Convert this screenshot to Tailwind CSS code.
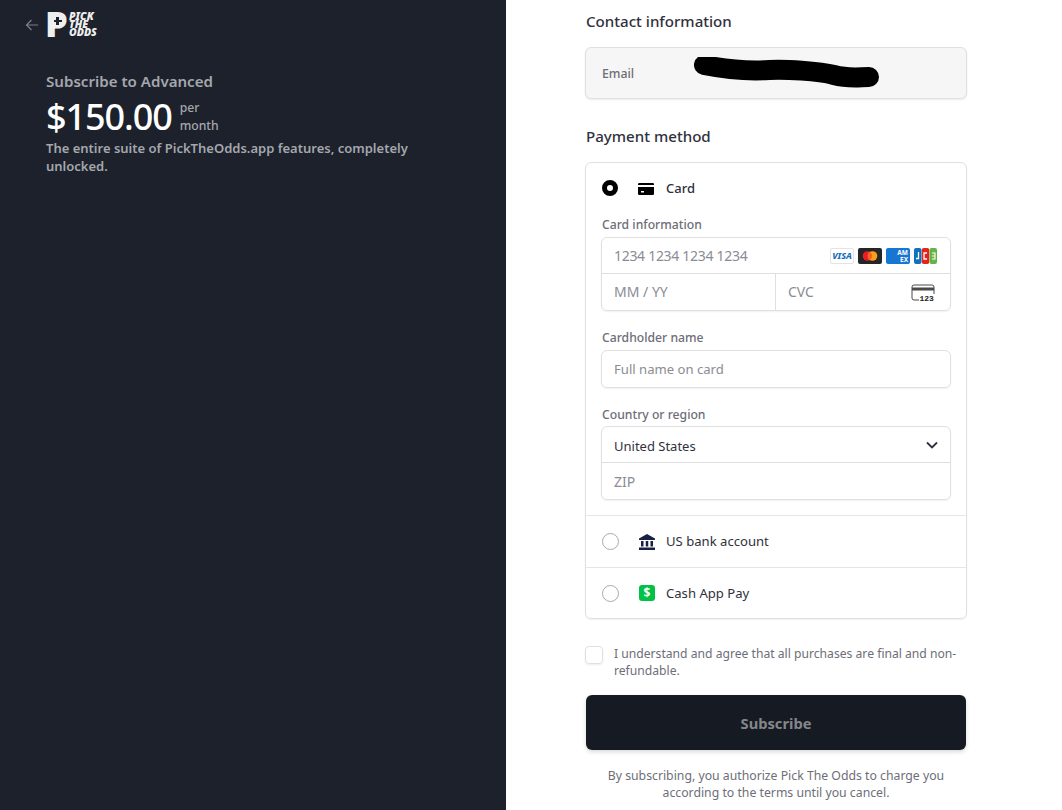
<!doctype html>
<html><head><meta charset="utf-8"><script src="https://cdn.jsdelivr.net/npm/@tailwindcss/browser@4"></script></head>
<body class="m-0 h-[810px] w-[1062px] overflow-hidden bg-white font-['Noto_Sans','Open_Sans',sans-serif]">
<div class="flex h-[810px]">
  <aside class="w-[506px] h-full bg-[#1c212c] shrink-0 pt-[12px]">
    <div class="flex items-center h-[25px] pl-[25px]">
      <svg class="w-[14px] h-[14px] text-[#7c7f86]" viewBox="0 0 14 14" fill="none" stroke="currentColor" stroke-width="1.2"><path d="M13 7H1.5M6.5 2 1.5 7l5 5"/></svg>
      <div class="relative ml-[9px] w-[50px] h-[25px]">
        <span class="absolute left-[-3px] top-[-12px] text-[36px] leading-[48px] font-black text-[#efefef]">P</span>
        <span class="absolute left-[4px] top-[3px] w-[10px] h-[11px] bg-[#efefef]"></span>
        <span class="absolute left-[8px] top-[5px] w-[2.500px] h-[8px] bg-[#1c212c]"></span>
        <span class="absolute left-[5.500px] top-[7.750px] w-[8px] h-[2.500px] bg-[#1c212c]"></span>
        <span class="absolute left-[21px] top-[0px] text-[10.500px] leading-[8px] italic font-black text-[#efefef] whitespace-pre">PICK
THE
ODDS</span>
      </div>
    </div>
    <div class="ml-[46px] mt-[33px] w-[380px]">
      <div class="text-[15.100px] leading-[22px] font-semibold text-[#a5a7ac]">Subscribe to Advanced</div>
      <div class="flex items-center mt-[6px] h-[38px]">
        <span class="text-[36px] leading-[38px] font-medium text-white tracking-[-1.100px]">$150.00</span>
        <span class="ml-[8px] text-[12.200px] leading-[18px] font-medium text-[#a5a7ac]">per<br>month</span>
      </div>
      <p class="mt-[3px] text-[13px] leading-[18px] font-semibold text-[#a5a7ac]">The entire suite of PickTheOdds.app features, completely unlocked.</p>
    </div>
  </aside>
  <main class="ml-[79px] w-[382px] pt-[10px] text-[#30313d]">
    <h2 class="ml-[1px] text-[15.100px] leading-[22px] font-medium">Contact information</h2>
    <div class="relative mt-[15px] h-[52px] rounded-md border border-[#e0e0e0] bg-[#f6f6f6] shadow-[0_1px_2px_rgba(0,0,0,0.08)] flex items-center pl-[16px] pt-[2px] text-[12.300px] font-medium text-[#6d6e78]">
      Email
      <svg class="absolute left-[108px] top-[9px] w-[188px] h-[32px]" viewBox="0 0 188 32" fill="none"><path d="M10 8C35 13 60 14 75 13S125 14 140 18 165 20 175 20" stroke="#000" stroke-width="20" stroke-linecap="round" stroke-linejoin="round"/></svg>
    </div>
    <h2 class="ml-[1px] mt-[26px] text-[15.100px] leading-[22px] font-medium">Payment method</h2>
    <div class="mt-[15px] rounded-md border border-[#e0e0e0] shadow-[0_1px_2px_rgba(0,0,0,0.06)]">
      <div class="px-[15px] pb-[15px]">
        <div class="flex items-center h-[52px]">
          <span class="ml-[1px] mb-[2px] w-[16px] h-[16px] rounded-full border-[5px] border-black bg-white shrink-0"></span>
          <svg class="ml-[20px] w-[16px] h-[12px]" viewBox="0 0 16 12"><path d="M0 1.2Q0 0 1.2 0h13.6Q16 0 16 1.2V2H0ZM0 4h16v6.8Q16 12 14.800 12H1.200Q0 12 0 10.800ZM3 8v1.500h3V8Z" fill="#000"/></svg>
          <span class="ml-[12px] text-[13px] font-medium">Card</span>
        </div>
        <div class="ml-[1px] text-[12.200px] leading-[18px] font-medium text-[#6d6e78] mt-[1px]">Card information</div>
        <div class="mt-[3px] rounded-md border border-[#e0e0e0] shadow-[0_1px_2px_rgba(0,0,0,0.06)] text-[14px] text-[#8b8c94]">
          <div class="flex items-center h-[36px] pl-[12px] pr-[13px] border-b border-[#e0e0e0]">
            <span class="tracking-[-0.3px]">1234 1234 1234 1234</span>
            <div class="ml-auto flex gap-[4px] items-center">
              <span class="w-[24px] h-[16px] rounded-[2px] border border-[#e3e3e3] bg-white flex items-center justify-center text-[9px] leading-none font-extrabold italic text-[#1a6fc0]">VISA</span>
              <svg class="w-[24px] h-[16px]" viewBox="0 0 24 16"><rect width="24" height="16" rx="2" fill="#252525"/><circle cx="9.500" cy="8" r="4.800" fill="#eb1c26"/><circle cx="14.500" cy="8" r="4.800" fill="#f99f1b"/><path d="M12 4a4.800 4.800 0 0 1 0 8 4.800 4.800 0 0 1 0-8" fill="#f26122"/></svg>
              <span class="w-[24px] h-[16px] rounded-[2px] bg-[#1676d2] flex items-center justify-end pr-[2px] text-[6.500px] leading-[7px] font-bold text-white text-right">AM<br>EX</span>
              <svg class="w-[23px] h-[16px]" viewBox="0 0 23 16"><rect width="7.500" height="16" rx="2" fill="#1072b8"/><rect x="7.800" width="7.500" height="16" rx="2" fill="#e5231f"/><rect x="15.500" width="7.500" height="16" rx="2" fill="#67b346"/><path d="M4.500 4v6.500H2" stroke="#fff" stroke-width="1.300" fill="none"/><path d="M13 5h-3v6h3" stroke="#fff" stroke-width="1.300" fill="none"/><path d="M18 5h3v6h-3M18 8h3" stroke="#fff" stroke-width="1.100" fill="none"/></svg>
            </div>
          </div>
          <div class="flex h-[36px]">
            <div class="w-[174px] flex items-center pl-[12px] pb-[2px] border-r border-[#e0e0e0]">MM / YY</div>
            <div class="flex-1 flex items-center pl-[12px] pr-[15px] justify-between">
              <span class="mb-[2px]">CVC</span>
              <svg class="w-[24px] h-[17px]" viewBox="0 0 24 17" fill="none"><path d="M8 16H3Q1 16 1 14V3Q1 1 3 1H21Q23 1 23 3V10" stroke="#4a4a4a" stroke-width="1"/><rect x="1" y="3.500" width="22" height="3" fill="#4a4a4a"/><text x="8.500" y="16.500" font-size="8" font-weight="600" fill="#222" font-family="Liberation Mono, monospace">123</text></svg>
            </div>
          </div>
        </div>
        <div class="ml-[1px] mt-[18px] text-[12.200px] leading-[18px] font-medium text-[#6d6e78]">Cardholder name</div>
        <div class="mt-[3px] h-[38px] rounded-md border border-[#e0e0e0] shadow-[0_1px_2px_rgba(0,0,0,0.06)] flex items-center pl-[12px] pt-[2px] text-[13.100px] text-[#8b8c94]">Full name on card</div>
        <div class="ml-[1px] mt-[18px] text-[12.200px] leading-[18px] font-medium text-[#6d6e78]">Country or region</div>
        <div class="mt-[2px] rounded-md border border-[#e0e0e0] shadow-[0_1px_2px_rgba(0,0,0,0.06)] text-[14px]">
          <div class="flex items-center justify-between h-[36px] pl-[12px] pr-[12px] border-b border-[#e0e0e0] text-[13px]">
            <span class="mt-[4px]">United States</span>
            <svg class="w-[12px] h-[8px]" viewBox="0 0 12 8" fill="none"><path d="M1 1.500 6 6.500l5-5" stroke="#30313d" stroke-width="1.800"/></svg>
          </div>
          <div class="flex items-center h-[36px] pl-[12px] text-[#8b8c94]">ZIP</div>
        </div>
      </div>
      <div class="flex items-center h-[52px] px-[15px] border-t border-[#e6e6e6]">
        <span class="ml-[1px] w-[17px] h-[17px] rounded-full border border-[#aaaaaa] shrink-0"></span>
        <svg class="ml-[20px] w-[16px] h-[16px]" viewBox="0 0 16 16" fill="#1a1f45"><path d="M8 0 16 4.500V6H0V4.500Z"/><rect x="2" y="7" width="2.500" height="5.500"/><rect x="6.750" y="7" width="2.500" height="5.500"/><rect x="11.500" y="7" width="2.500" height="5.500"/><rect x="0" y="13.500" width="16" height="2.500"/></svg>
        <span class="ml-[11px] text-[13.100px]">US bank account</span>
      </div>
      <div class="flex items-center h-[51px] px-[15px] border-t border-[#e6e6e6]">
        <span class="ml-[1px] w-[17px] h-[17px] rounded-full border border-[#aaaaaa] shrink-0"></span>
        <span class="ml-[20px] w-[16px] h-[16px] rounded-[3px] bg-[#00c244] flex items-center justify-center text-[12px] leading-none font-bold text-white">$</span>
        <span class="ml-[11px] pt-[2px] text-[13.100px]">Cash App Pay</span>
      </div>
    </div>
    <div class="flex mt-[27px]">
      <span class="w-[18px] h-[18px] rounded-[4px] border border-[#e0e0e0] shadow-[0_1px_2px_rgba(0,0,0,0.08)] shrink-0"></span>
      <p class="ml-[11px] -mt-[1px] text-[12.150px] leading-[17px] text-[#6d6e78]">I understand and agree that all purchases are final and non-refundable.</p>
    </div>
    <button class="mt-[16px] ml-[1px] block w-[380px] h-[55px] pt-[2px] rounded-md bg-[#161a22] text-[#84868a] text-[14.700px] font-bold shadow-[0_2px_4px_rgba(0,0,0,0.15)]">Subscribe</button>
    <p class="mt-[17px] text-center text-[12.250px] leading-[17px] text-[#6d6e78] px-[16px]">By subscribing, you authorize Pick The Odds to charge you according to the terms until you cancel.</p>
  </main>
</div>
</body></html>
